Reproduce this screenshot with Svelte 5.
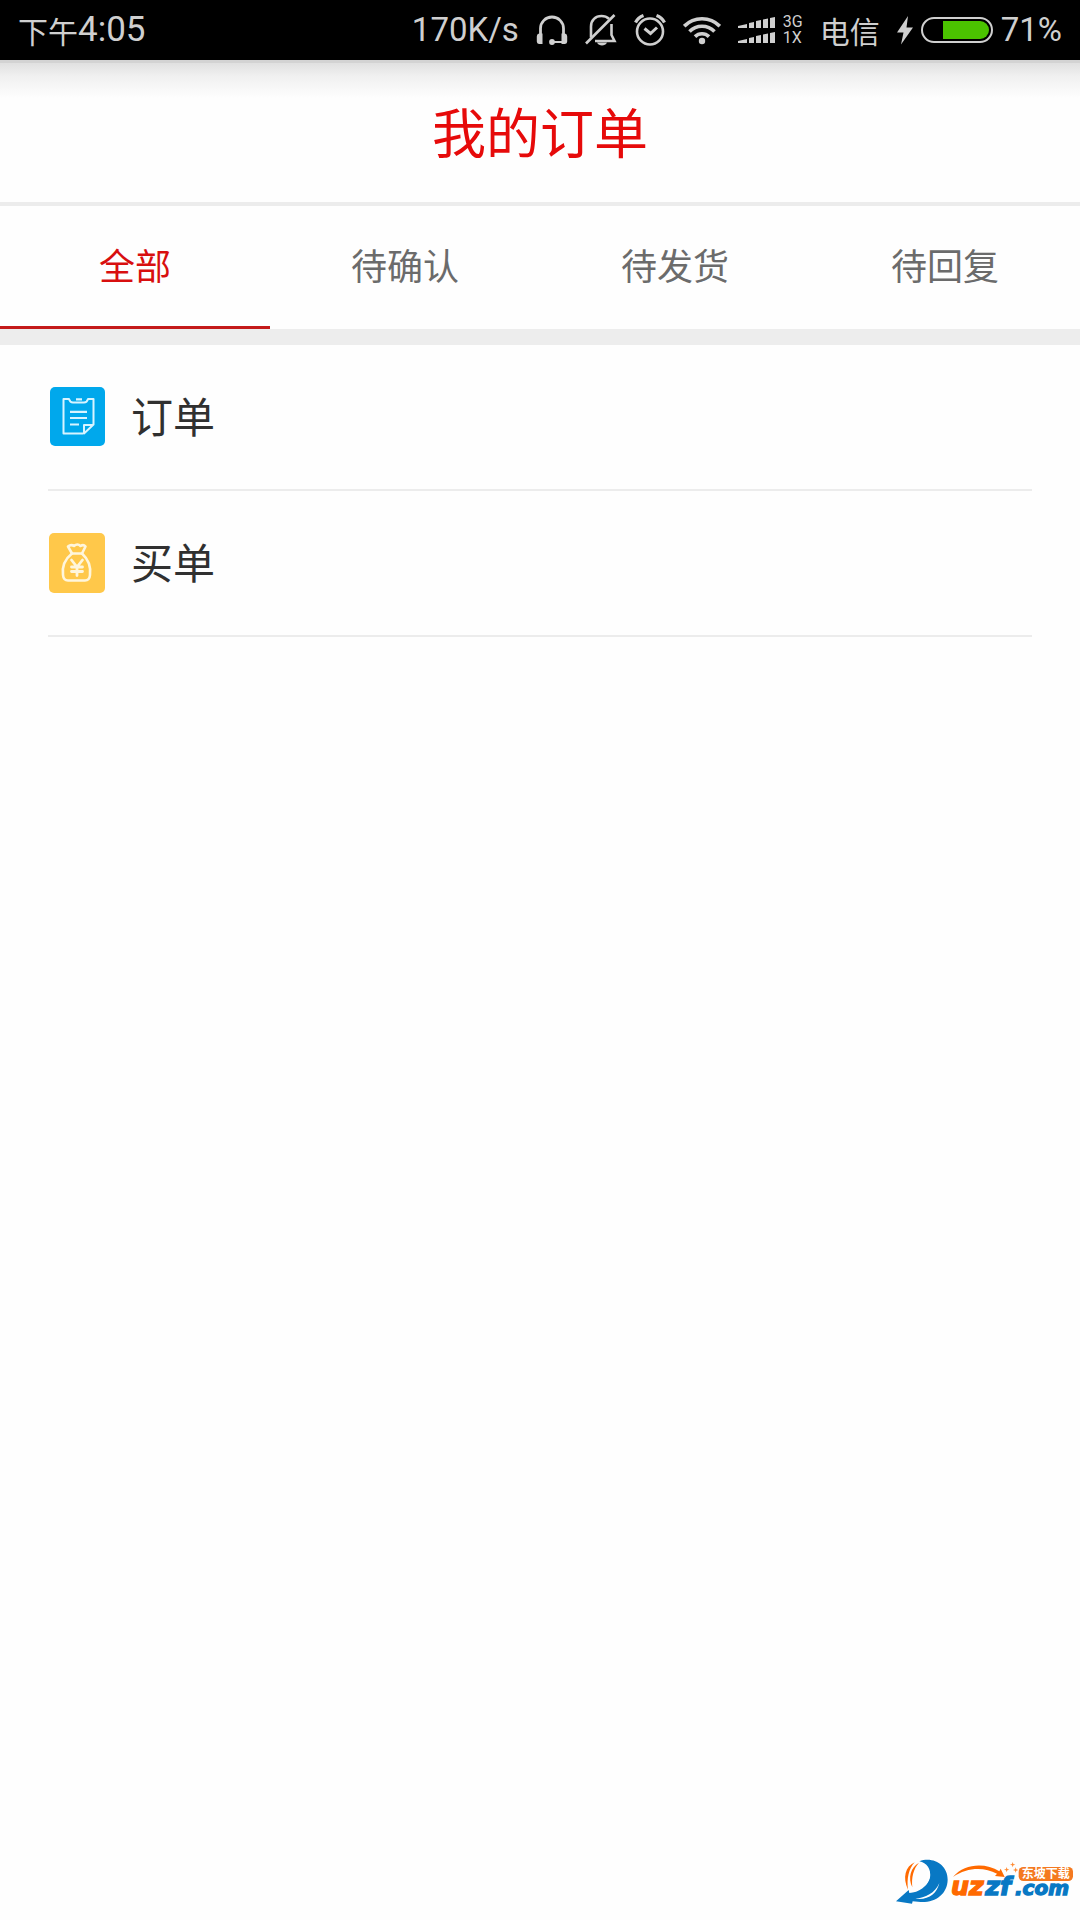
<script lang="ts">
  const tabs = ['全部', '待确认', '待发货', '待回复'];

  let active = $state(0);
</script>

<div class="page">
  <div class="status">
    <div class="status__time"><span class="status__cjk">下午</span><span>4:05</span></div>
    <div class="status__right">
      <span>170K/s</span>
      <svg class="status__icon" viewBox="0 0 32 32" aria-hidden="true">
        <path d="M4.500 21V14.500a11.500 11.500 0 0 1 23 0V21" fill="none" stroke="currentColor" stroke-width="2.800" />
        <path d="M3 19.500h3.500V30H3a2.500 2.500 0 0 1-2.200-2.500v-5A3 3 0 0 1 3 19.500ZM29 19.500h-3.500V30H29a2.500 2.500 0 0 0 2.200-2.500v-5a3 3 0 0 0-2.200-3Z" fill="currentColor" />
        <path d="M16 28h12" stroke="currentColor" stroke-width="2" />
        <circle cx="16" cy="28" r="2.900" fill="currentColor" />
      </svg>
      <svg class="status__icon" viewBox="0 0 32 32" aria-hidden="true">
        <path d="M6 23.500V12.500C6 6 10.500 2 16.500 2c3 0 5.500 1 7.500 2.800M26.500 10v11l3 6H10" fill="none" stroke="currentColor" stroke-width="2.600" />
        <path d="M1 29.500 29.500 1" stroke="currentColor" stroke-width="2.600" />
        <path d="M12 28.500h10c-1 2.300-3 3-5 3s-4-.7-5-3Z" fill="currentColor" />
      </svg>
      <svg class="status__icon" viewBox="0 0 32 32" aria-hidden="true">
        <g fill="none" stroke="currentColor">
          <circle cx="16" cy="17.500" r="13" stroke-width="2.600" />
          <path d="M1.500 8.500Q4 3.500 9.500 1.500M30.500 8.500Q28 3.500 22.500 1.500" stroke-width="3.200" />
          <path d="m10.500 14.500 6 5 6.500-6" stroke-width="3" />
        </g>
      </svg>
      <svg class="status__wifi" viewBox="0 0 38 32" aria-hidden="true">
        <g fill="none" stroke="currentColor" stroke-width="3.600">
          <path d="M1.200 12.200a25 25 0 0 1 35.600 0" />
          <path d="M6.500 17.500a17.500 17.500 0 0 1 25 0" />
          <path d="M12 22.600a10 10 0 0 1 14 0" />
        </g>
        <circle cx="19" cy="27" r="3.200" fill="currentColor" />
      </svg>
      <div class="status__pair">
        <svg class="status__signal" viewBox="0 0 37 32" fill="currentColor" aria-hidden="true">
          <path d="M0 14v-2l9-2v4ZM11 14V9l5-1v6ZM18 14V7l5-1v8ZM25 14V5.500l5-1V14ZM32 14V4l5-1v11Z" />
          <path d="M0 29v-2l9-2v4ZM11 29v-5l5-1v6ZM18 29v-7l5-1v8ZM25 29v-8.500l5-1V29ZM32 29V19l5-1v11Z" />
        </svg>
        <div class="status__net"><span>3G</span><span>1X</span></div>
      </div>
      <span class="status__cjk">电信</span>
      <div class="status__pair">
        <svg class="status__bolt" viewBox="0 0 16 32" fill="currentColor" aria-hidden="true">
          <path d="M11 2 0 18.500h6.500L4 30.500 16 13.500H9.500Z" />
        </svg>
        <svg class="status__battery" viewBox="0 0 72 32" aria-hidden="true">
          <rect x="1" y="4" width="70" height="24" rx="12" fill="none" stroke="currentColor" stroke-width="2" />
          <path d="M22 7h37a9 9 0 0 1 0 18H22Z" fill="#4bc400" />
        </svg>
        <span>71%</span>
      </div>
    </div>
  </div>

  <header class="header">
    <h1>我的订单</h1>
  </header>

  <div class="tabs" role="tablist">
    {#each tabs as tab, i}
      <button
        type="button"
        role="tab"
        class="tabs__item"
        class:tabs__item--active={active === i}
        aria-selected={active === i}
        onclick={() => (active = i)}
      >
        {tab}
      </button>
    {/each}
  </div>

  <nav class="list">
    <a class="list__row" href="#orders">
      <svg class="list__icon" viewBox="0 0 56 60" aria-hidden="true">
        <rect x="1" width="55" height="59" rx="5" fill="#00a8ec" />
        <g fill="none" stroke="#d8f4ff" stroke-width="2" stroke-linejoin="round">
          <path d="M34 46.500H14.500V12H20q1 3.500 4 3.500h11q3 0 4-3.500h5.500v25.500L35 46.500V38h9" />
          <path d="M27 12.300h6M21 24.800h17M21 31h17M21 37.500h9" stroke-width="2.200" />
        </g>
      </svg>
      <span>订单</span>
    </a>
    <a class="list__row" href="#pay">
      <svg class="list__icon" viewBox="0 0 56 60" aria-hidden="true">
        <rect width="56" height="60" rx="5" fill="#ffc84a" />
        <g fill="none" stroke="#fff6dc" stroke-width="2.600" stroke-linejoin="round" stroke-linecap="round">
          <path d="M23 20.500 19 13.500q3-2.500 6-.5 3.500-3 6.500 0 3-2 5 .5L33 20.500Z" />
          <path d="M23 20.500C16 26 13 34 14 42q.5 5.500 5 5.500h17q4.500 0 5-5.500C42 34 39 26 33 20.500" />
          <path d="m22.500 27 5.500 7 5.500-7M28 34v8.500M22.500 34h11M22.500 38.500h11" stroke-width="2.800" />
        </g>
      </svg>
      <span>买单</span>
    </a>
  </nav>

  <footer class="footer">
    <svg class="footer__logo" viewBox="0 0 600 240" role="img" aria-label="uzzf.com 东坡下载">
      <g fill="#ff6a00">
        <path d="M104 67C76 80 67 112 84 149c-4-34 2-62 20-82Z" />
        <path d="M117 68C92 82 83 113 97 142c-3-30 3-55 20-74Z" />
      </g>
      <path
        d="M118 64C160 48 204 76 203 119c-1 43-36 69-81 67l-24-2-2 7-48-7 38-34 2 9c28-2 55-20 61-46 6-25-9-45-31-49Z"
        fill="#0878c4"
      />
      <path d="M113 72c30 8 38 38 21 67 27-26 23-62-21-67Z" fill="#fff" />
      <path d="M106 176c29-2 60-17 72-47-8 34-34 52-72 47Z" fill="#fff" />
      <path d="M219 111c35-41 97-43 139-17l4-8 12 25-29-3 6-7c-40-21-90-19-132 10Z" fill="#ff6a00" />
      <g fill="#ff8a32">
        <path d="m380 81 2 6 6 2-6 2-2 6-2-6-6-2 6-2ZM398 66l2 6 6 2-6 2-2 6-2-6-6-2 6-2ZM407 82l2 6 6 2-6 2-2 6-2-6-6-2 6-2Z" />
      </g>
      <text class="footer__name footer__name--orange" x="213" y="165">uz</text>
      <text class="footer__name" x="316" y="165">zf</text>
      <text class="footer__name footer__name--small" x="405" y="165">.com</text>
      <rect x="416" y="81" width="163" height="42" rx="14" fill="#f47920" />
      <text class="footer__badge" x="425" y="115">东坡下载</text>
    </svg>
  </footer>
</div>

<style>
  :global(body) {
    margin: 0;
    background: #fefefe;
  }

  .page {
    display: flex;
    flex-direction: column;
    min-height: 100vh;
    font-family: 'Noto Sans CJK SC', sans-serif;
  }

  .status {
    display: flex;
    align-items: center;
    justify-content: space-between;
    height: 60px;
    padding: 0 18px;
    background: #000;
    color: #cfcfcf;
    font-family: Roboto, 'Noto Sans CJK SC', sans-serif;
    font-size: 33px;
    line-height: 60px;
    white-space: nowrap;
  }

  .status__time,
  .status__right,
  .status__pair {
    display: flex;
    align-items: center;
  }

  .status__time {
    font-size: 35px;
  }

  .status__right {
    gap: 17px;
  }

  .status__pair {
    gap: 8px;
  }

  .status__cjk {
    font-family: 'Noto Sans CJK SC', sans-serif;
    font-size: 30px;
  }

  .status svg {
    flex-shrink: 0;
    height: 32px;
  }

  .status__icon {
    width: 32px;
  }

  .status__wifi {
    width: 38px;
  }

  .status__signal {
    width: 37px;
  }

  .status__bolt {
    width: 16px;
  }

  .status__battery {
    width: 72px;
  }

  .status__net {
    display: flex;
    flex-direction: column;
    font-size: 16px;
    line-height: 16px;
  }

  .header {
    display: flex;
    align-items: center;
    justify-content: center;
    height: 142px;
    border-bottom: 4px solid #ececec;
    background: linear-gradient(#d3d3d3 3px, #e0e0e0 3px, #f0f0f0 16px, #fefefe 38px);
  }

  h1 {
    margin: 0;
    color: #e60a0a;
    font-size: 54px;
    font-weight: 400;
    line-height: 80px;
  }

  .tabs {
    display: grid;
    grid-template-columns: repeat(4, 1fr);
    border-bottom: 16px solid #ededed;
  }

  .tabs__item {
    height: 123px;
    padding: 0 0 4px;
    border: 0;
    border-bottom: 3px solid transparent;
    background: none;
    color: #6b6b6b;
    font-family: inherit;
    font-size: 36px;
    cursor: pointer;
  }

  .tabs__item--active {
    border-color: #c41a1a;
    color: #d80f0f;
  }

  .list {
    padding: 0 48px;
  }

  .list__row {
    display: flex;
    align-items: center;
    gap: 26px;
    padding: 42px 0 42px 1px;
    border-bottom: 2px solid #ececec;
    color: #303030;
    font-size: 42px;
    line-height: 56px;
    text-decoration: none;
  }

  .list__row span {
    padding-bottom: 4px;
  }

  .list__icon {
    width: 56px;
    height: 60px;
  }

  .footer {
    display: flex;
    justify-content: flex-end;
    margin-top: auto;
  }

  .footer__logo {
    width: 200px;
    height: 80px;
  }

  .footer__name {
    fill: #0878c4;
    stroke: #0878c4;
    stroke-width: 4px;
    font-family: 'DejaVu Sans', sans-serif;
    font-size: 76px;
    font-style: italic;
    font-weight: 700;
  }

  .footer__name--orange {
    fill: #ff6a00;
    stroke: #ff6a00;
  }

  .footer__name--small {
    font-size: 60px;
  }

  .footer__badge {
    fill: #fff;
    font-size: 36px;
    font-weight: 700;
  }
</style>
